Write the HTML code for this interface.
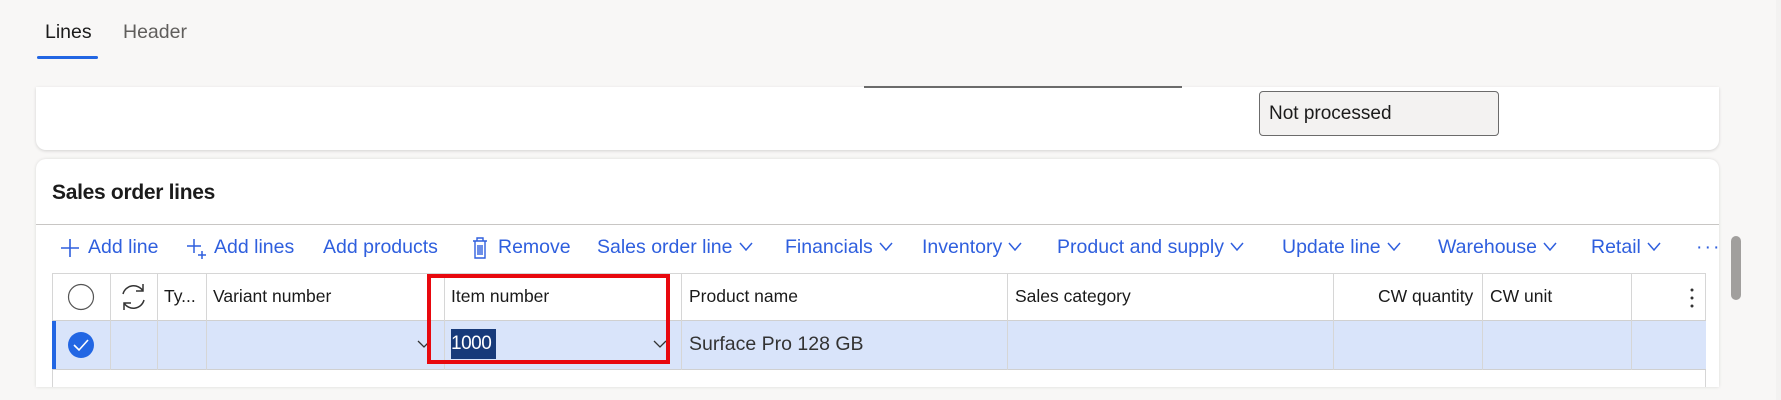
<!DOCTYPE html>
<html><head><meta charset="utf-8"><style>
*{margin:0;padding:0;box-sizing:border-box}
body{width:1781px;height:400px;overflow:hidden;background:#f8f7f6;font-family:"Liberation Sans",sans-serif;position:relative}
.a{position:absolute;white-space:nowrap}
.tb{position:absolute;top:236px;font-size:19.5px;color:#2f5fde;white-space:nowrap}
.tb svg{display:inline-block;vertical-align:middle;margin-left:6px;margin-top:-3px}
.th{position:absolute;top:286px;font-size:17.5px;color:#1a1a1a}
.vl{position:absolute;top:273px;width:1px;height:97px;background:#d6d6d6}
</style></head><body>
<div class="a" style="left:45px;top:21px;font-size:19.5px;color:#1b1b1b">Lines</div>
<div class="a" style="left:123px;top:21px;font-size:19.5px;color:#605e5c">Header</div>
<div class="a" style="left:37px;top:56px;width:61px;height:3px;background:#2266e3;border-radius:2px"></div>

<div class="a" style="left:36px;top:87px;width:1683px;height:63px;background:#fff;border-radius:0 0 10px 10px;box-shadow:0 1px 3px rgba(0,0,0,.15)"></div>
<div class="a" style="left:864px;top:86px;width:318px;height:2px;background:#6b6b6b"></div>
<div class="a" style="left:1259px;top:91px;width:240px;height:45px;background:#f3f2f1;border:1px solid #6b6b6b;border-radius:4px;font-size:19px;color:#1b1b1b;padding:11px 0 0 9px">Not processed</div>

<div class="a" style="left:36px;top:159px;width:1683px;height:228px;background:#fff;border-radius:10px 10px 0 0;box-shadow:0 0 3px rgba(0,0,0,.12)"></div>
<div class="a" style="left:52px;top:181px;font-size:21px;font-weight:bold;color:#1b1b1b;letter-spacing:-.3px">Sales order lines</div>
<div class="a" style="left:36px;top:224px;width:1683px;height:1px;background:#c8c6c4"></div>

<svg class="a" style="left:60px;top:238px" width="20" height="20"><path d="M10 1V19M1 10H19" stroke="#2f5fde" stroke-width="1.6"/></svg>
<div class="tb" style="left:88px">Add line</div>
<svg class="a" style="left:186px;top:238px" width="22" height="22"><path d="M8 1V15M1 8H15M16 13V21M12 17H20" stroke="#2f5fde" stroke-width="1.5"/></svg>
<div class="tb" style="left:214px">Add lines</div>
<div class="tb" style="left:323px">Add products</div>
<svg class="a" style="left:471px;top:236px" width="18" height="24"><path d="M2 5H16M6 5V2H12V5M4 5V22H14V5M7 9V19M9 9V19M11 9V19" stroke="#2f5fde" stroke-width="1.4" fill="none"/></svg>
<div class="tb" style="left:498px">Remove</div>
<div class="tb" style="left:597px">Sales order line<svg width="14" height="9"><path d="M1 1L7 8L13 1" stroke="#2f5fde" stroke-width="1.5" fill="none"/></svg></div>
<div class="tb" style="left:785px">Financials<svg width="14" height="9"><path d="M1 1L7 8L13 1" stroke="#2f5fde" stroke-width="1.5" fill="none"/></svg></div>
<div class="tb" style="left:922px">Inventory<svg width="14" height="9"><path d="M1 1L7 8L13 1" stroke="#2f5fde" stroke-width="1.5" fill="none"/></svg></div>
<div class="tb" style="left:1057px">Product and supply<svg width="14" height="9"><path d="M1 1L7 8L13 1" stroke="#2f5fde" stroke-width="1.5" fill="none"/></svg></div>
<div class="tb" style="left:1282px">Update line<svg width="14" height="9"><path d="M1 1L7 8L13 1" stroke="#2f5fde" stroke-width="1.5" fill="none"/></svg></div>
<div class="tb" style="left:1438px">Warehouse<svg width="14" height="9"><path d="M1 1L7 8L13 1" stroke="#2f5fde" stroke-width="1.5" fill="none"/></svg></div>
<div class="tb" style="left:1591px">Retail<svg width="14" height="9"><path d="M1 1L7 8L13 1" stroke="#2f5fde" stroke-width="1.5" fill="none"/></svg></div>
<div class="tb" style="left:1696px;letter-spacing:2px">···</div>

<div class="a" style="left:52px;top:273px;width:1654px;height:114px;border:1px solid #d6d6d6;border-bottom:none"></div>
<div class="a" style="left:52px;top:320px;width:1654px;height:50px;background:#d9e4fa;border-top:1px solid #d0d0d0;border-bottom:1px solid #d0d0d0"></div>
<div class="a" style="left:52px;top:321px;width:4px;height:48px;background:#2266e3"></div>
<div class="vl" style="left:110px"></div><div class="vl" style="left:157px"></div><div class="vl" style="left:206px"></div><div class="vl" style="left:444px"></div><div class="vl" style="left:681px"></div><div class="vl" style="left:1007px"></div><div class="vl" style="left:1333px"></div><div class="vl" style="left:1482px"></div><div class="vl" style="left:1631px"></div>
<svg class="a" style="left:0;top:0" width="1781" height="400">
<circle cx="81" cy="297" r="12.5" fill="none" stroke="#555" stroke-width="1.2"/>
<g stroke="#333" stroke-width="1.5" fill="none"><path d="M123 294A11 11 0 0 1 143 291M143 284V291H136"/><path d="M144 300A11 11 0 0 1 124 303M124 310V303H131"/></g>
<circle cx="81" cy="345" r="13" fill="#2266e3"/><path d="M74 345L79 350L88 340" stroke="#fff" stroke-width="1.6" fill="none"/>
<path d="M418 341L424 347L430 341M654 341L660 347L666 341" stroke="#333" stroke-width="1.3" fill="none"/>
<g fill="#333"><circle cx="1692" cy="290" r="1.5"/><circle cx="1692" cy="298" r="1.5"/><circle cx="1692" cy="306" r="1.5"/></g>
</svg>
<div class="th" style="left:164px">Ty...</div>
<div class="th" style="left:213px">Variant number</div>
<div class="th" style="left:451px">Item number</div>
<div class="th" style="left:689px">Product name</div>
<div class="th" style="left:1015px">Sales category</div>
<div class="th" style="left:1378px">CW quantity</div>
<div class="th" style="left:1490px">CW unit</div>
<div class="a" style="left:451px;top:329px;height:30px;width:45px;background:#173a7a;color:#fff;font-size:19px;line-height:30px;letter-spacing:-.5px">1000</div>
<div class="a" style="left:689px;top:333px;font-size:19.5px;color:#333">Surface Pro 128 GB</div>
<div class="a" style="left:427px;top:274px;width:243px;height:90px;border:4px solid #e8080e"></div>

<div class="a" style="left:1731px;top:236px;width:10px;height:64px;background:#a19f9d;border-radius:5px"></div>
<div class="a" style="left:1776px;top:0;width:5px;height:400px;background:#f3f2f1"></div>
</body></html>
